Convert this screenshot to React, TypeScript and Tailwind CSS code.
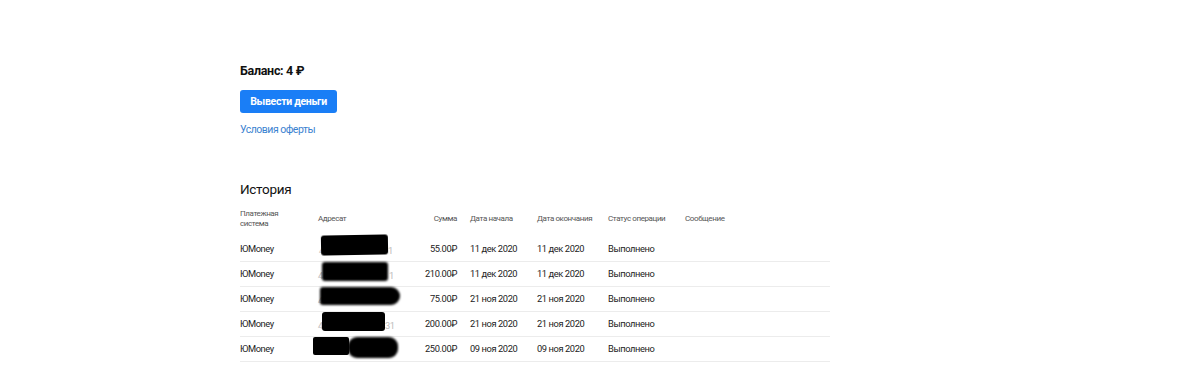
import React from "react";

const rows = [
  { sum: "55.00₽", start: "11 дек 2020", end: "11 дек 2020", blob: 1 },
  { sum: "210.00₽", start: "11 дек 2020", end: "11 дек 2020", blob: 2 },
  { sum: "75.00₽", start: "21 ноя 2020", end: "21 ноя 2020", blob: 3 },
  { sum: "200.00₽", start: "21 ноя 2020", end: "21 ноя 2020", blob: 4 },
  { sum: "250.00₽", start: "09 ноя 2020", end: "09 ноя 2020", blob: 5 },
];

const cols = "grid grid-cols-[78px_90px_49px_80px_71px_77px_145px]";

function Blob({ n }: { n: number }) {
  if (n === 1)
    return (
      <>
        <span className="absolute left-[1px] top-[1px] text-[#bbb]">4</span>
        <span className="absolute left-[70px] top-[1px] text-[#bbb]">1</span>
        <div className="absolute left-[3px] top-[-8px] h-[20px] w-[67px] bg-black rounded-[3px] blur-[0.6px] -rotate-[1deg]" />
      </>
    );
  if (n === 2)
    return (
      <>
        <span className="absolute left-[0px] top-[1px] text-[#bbb]">4</span>
        <span className="absolute left-[71px] top-[1px] text-[#bbb]">1</span>
        <div className="absolute left-[4px] top-[-6px] h-[19px] w-[66px] bg-black rounded-[3px] blur-[0.8px]" />
      </>
    );
  if (n === 3)
    return (
      <>
        <span className="absolute left-[0px] top-[1px] text-[#bbb]">4</span>
        <div className="absolute left-[2px] top-[-6px] h-[18px] w-[80px] bg-black rounded-r-[9px] rounded-l-[3px] blur-[1px]" />
      </>
    );
  if (n === 4)
    return (
      <>
        <span className="absolute left-[0px] top-[1px] text-[#bbb]">4</span>
        <span className="absolute left-[67px] top-[1px] text-[#bbb]">31</span>
        <div className="absolute left-[4px] top-[-6px] h-[19px] w-[63px] bg-black rounded-[3px] blur-[0.7px]" />
      </>
    );
  return (
    <>
      <div className="absolute left-[-5px] top-[-6px] h-[18px] w-[36px] bg-black rounded-[2px] blur-[0.6px]" />
      <div className="absolute left-[30px] top-[-6px] h-[21px] w-[50px] bg-black rounded-[9px] blur-[1px]" />
    </>
  );
}

export default function App() {
  return (
    <div
      className="min-h-[377px] bg-white text-[#111]"
      style={{ fontFamily: 'Roboto, "Liberation Sans", Arial, sans-serif' }}
    >
      <div className="pl-[240px] pt-[61px]">
        <div className="h-[20px] flex items-center text-[12.5px] font-bold tracking-[-0.3px]">Баланс: 4 ₽</div>
        <button className="mt-[9px] h-[23px] w-[97px] rounded-[3px] bg-[#1a7ef6] text-white text-[10.5px] font-bold tracking-[-0.3px] flex items-center justify-center">
          Вывести деньги
        </button>
        <div className="mt-[9px] h-[16px] flex items-center text-[10.5px] tracking-[-0.5px] text-[#3a82d0]">Условия оферты</div>

        <div className="mt-[41px] h-[20px] flex items-center text-[13.5px] tracking-[-0.3px]">История</div>

        <div className="mt-[8px] w-[590px]">
          <div className={`${cols} h-[30px] pt-[2px] text-[8px] text-[#555] leading-[10px] tracking-[-0.4px] whitespace-nowrap`}>
            <div className="h-[20px] flex items-center">Платежная<br />система</div>
            <div className="h-[20px] flex items-center">Адресат</div>
            <div className="h-[20px] flex items-center justify-end">Сумма</div>
            <div className="h-[20px] flex items-center pl-[13px]">Дата начала</div>
            <div className="h-[20px] flex items-center">Дата окончания</div>
            <div className="h-[20px] flex items-center">Статус операции</div>
            <div className="h-[20px] flex items-center">Сообщение</div>
          </div>
          {rows.map((r, i) => (
            <div
              key={i}
              className={`${cols} h-[25px] items-center border-b border-[#ececec] text-[9.3px] tracking-[-0.4px] text-[#222] whitespace-nowrap`}
            >
              <div>ЮMoney</div>
              <div className="relative h-[12px]">
                <Blob n={r.blob} />
              </div>
              <div className="text-right">{r.sum}</div>
              <div className="pl-[13px]">{r.start}</div>
              <div>{r.end}</div>
              <div>Выполнено</div>
              <div />
            </div>
          ))}
        </div>
      </div>
    </div>
  );
}
